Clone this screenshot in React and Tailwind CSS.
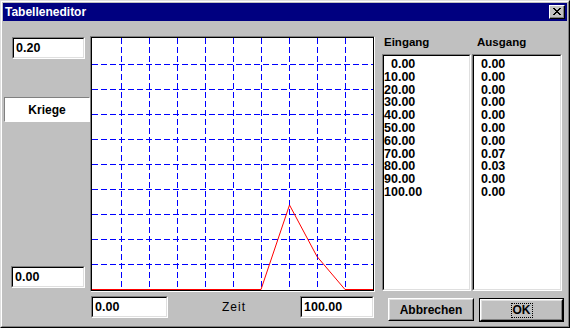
import React from 'react';

const eingang = ['\u20070.00', '10.00', '20.00', '30.00', '40.00', '50.00', '60.00', '70.00', '80.00', '90.00', '100.00'];
const ausgang = ['\u20070.00', '\u20070.00', '\u20070.00', '\u20070.00', '\u20070.00', '\u20070.00', '\u20070.00', '\u20070.07', '\u20070.03', '\u20070.00', '\u20070.00'];

const font = { fontFamily: '"Liberation Sans", Arial, sans-serif' };

function Field({ value, className }) {
    return (
        <div className={'border-t border-l border-t-[#808080] border-l-[#808080] border-r border-b border-r-white border-b-white ' + className}>
            <div className="h-full border-t border-l border-t-black border-l-black border-r border-b border-r-[#dfdfdf] border-b-[#dfdfdf] bg-white flex items-center pl-[2px] text-[12.5px] font-bold text-black">
                {value}
            </div>
        </div>
    );
}

function ListBox({ items, className }) {
    return (
        <div className={'border-t border-l border-t-[#808080] border-l-[#808080] border-r border-b border-r-white border-b-white ' + className}>
            <div className="h-full border-t border-l border-t-black border-l-black border-r border-b border-r-[#dfdfdf] border-b-[#dfdfdf] bg-white pt-[2px] text-[12.5px] font-bold leading-[12.8px] text-black">
                {items.map((v, i) => (
                    <div key={i} className="whitespace-pre">
                        {v}
                    </div>
                ))}
            </div>
        </div>
    );
}

function Chart() {
    const xs = [29, 57, 85, 113, 141, 169, 197, 225, 253];
    const ys = [26, 51, 76, 101, 126, 151, 176, 201, 226];
    return (
        <div className="w-[285px] h-[256px] border-t border-l border-t-[#808080] border-l-[#808080] border-r border-b border-r-white border-b-white">
            <div className="w-full h-full border border-black bg-white">
                <svg width="281" height="252" shapeRendering="crispEdges" className="block">
                    {xs.map((x) => (
                        <line key={'v' + x} x1={x + 0.5} y1="0" x2={x + 0.5} y2="252" stroke="#0000ff" strokeDasharray="6 3" />
                    ))}
                    {ys.map((y) => (
                        <line key={'h' + y} x1="0" y1={y + 0.5} x2="281" y2={y + 0.5} stroke="#0000ff" strokeDasharray="6 3" />
                    ))}
                    <polyline
                        points="0,251.5 169,251.5 197.5,167 225,218.5 253,251.5 281,251.5"
                        fill="none"
                        stroke="#ff0000"
                        strokeWidth="1"
                        shapeRendering="auto"
                    />
                </svg>
            </div>
        </div>
    );
}

function Button({ children, isDefault, className }) {
    const inner = (
        <div className="h-full border-t border-l border-t-white border-l-white border-r border-b border-r-black border-b-black">
            <div className="h-full border-t border-l border-t-[#dfdfdf] border-l-[#dfdfdf] border-r border-b border-r-[#808080] border-b-[#808080] bg-[#c0c0c0] flex items-center justify-center text-[12px] font-bold text-black">
                {children}
            </div>
        </div>
    );
    if (isDefault) {
        return <div className={'border border-black ' + className}>{inner}</div>;
    }
    return <div className={className}>{inner}</div>;
}

export default function App() {
    return (
        <div style={font} className="w-[570px] h-[328px] border-t border-l border-t-[#dfdfdf] border-l-[#dfdfdf] border-r border-b border-r-black border-b-black">
            <div className="w-full h-full border-t border-l border-t-white border-l-white border-r border-b border-r-[#808080] border-b-[#808080] bg-[#c0c0c0] p-[1px]">
                {/* Titelleiste */}
                <div className="h-[18px] bg-[#000080] flex items-center justify-between pl-[2px] pr-[2px]">
                    <span className="text-white text-[12px] font-bold leading-none">Tabelleneditor</span>
                    <div className="w-[16px] h-[14px] border-t border-l border-t-white border-l-white border-r border-b border-r-black border-b-black">
                        <div className="w-full h-full border-r border-b border-r-[#808080] border-b-[#808080] bg-[#c0c0c0] flex items-center justify-center">
                            <svg width="8" height="7" viewBox="0 0 8 7" shapeRendering="crispEdges">
                                <path d="M0 0h2v1h-2zM6 0h2v1h-2zM1 1h2v1h-2zM5 1h2v1h-2zM2 2h4v1h-4zM3 3h2v1h-2zM2 4h4v1h-4zM1 5h2v1h-2zM5 5h2v1h-2zM0 6h2v1h-2zM6 6h2v1h-2z" fill="#000" />
                            </svg>
                        </div>
                    </div>
                </div>

                <div className="flex pl-[1px]">
                    {/* linke Spalte */}
                    <div className="w-[86px] flex flex-col">
                        <Field value="0.20" className="mt-[16px] ml-[8px] w-[73px] h-[22px]" />
                        <div className="mt-[38px] h-[25px] border-t border-l border-t-[#808080] border-l-[#808080] border-r border-b border-r-white border-b-white bg-white flex items-center justify-center text-[12px] font-bold text-black">
                            Kriege
                        </div>
                        <Field value="0.00" className="mt-[144px] ml-[7px] w-[74px] h-[22px]" />
                    </div>

                    {/* Diagramm */}
                    <div className="w-[285px] flex flex-col">
                        <div className="mt-[15px]">
                            <Chart />
                        </div>
                        <div className="mt-[4px] h-[22px] flex items-center">
                            <Field value="0.00" className="ml-[1px] w-[77px] h-[22px]" />
                            <div className="flex-1 text-center text-[12px] tracking-[1px] text-black">Zeit</div>
                            <Field value="100.00" className="mr-[1px] w-[74px] h-[22px]" />
                        </div>
                    </div>

                    {/* rechte Spalte */}
                    <div className="ml-[7px] w-[182px] flex flex-col">
                        <div className="h-[33px] flex items-end pb-[3px] text-[11.5px] font-bold text-black">
                            <div className="w-[90px] pl-[2px]">Eingang</div>
                            <div className="pl-[5px]">Ausgang</div>
                        </div>
                        <div className="flex h-[237px]">
                            <ListBox items={eingang} className="w-[89px] h-full" />
                            <ListBox items={ausgang} className="ml-[1px] w-[90px] h-full" />
                        </div>
                        <div className="flex mt-[7px]">
                            <Button className="ml-[6px] w-[86px] h-[23px]">Abbrechen</Button>
                            <Button isDefault className="ml-[5px] w-[85px] h-[24px]">
                                <span className="border border-dotted border-black px-[1px] leading-[13px]">OK</span>
                            </Button>
                        </div>
                    </div>
                </div>
            </div>
        </div>
    );
}
